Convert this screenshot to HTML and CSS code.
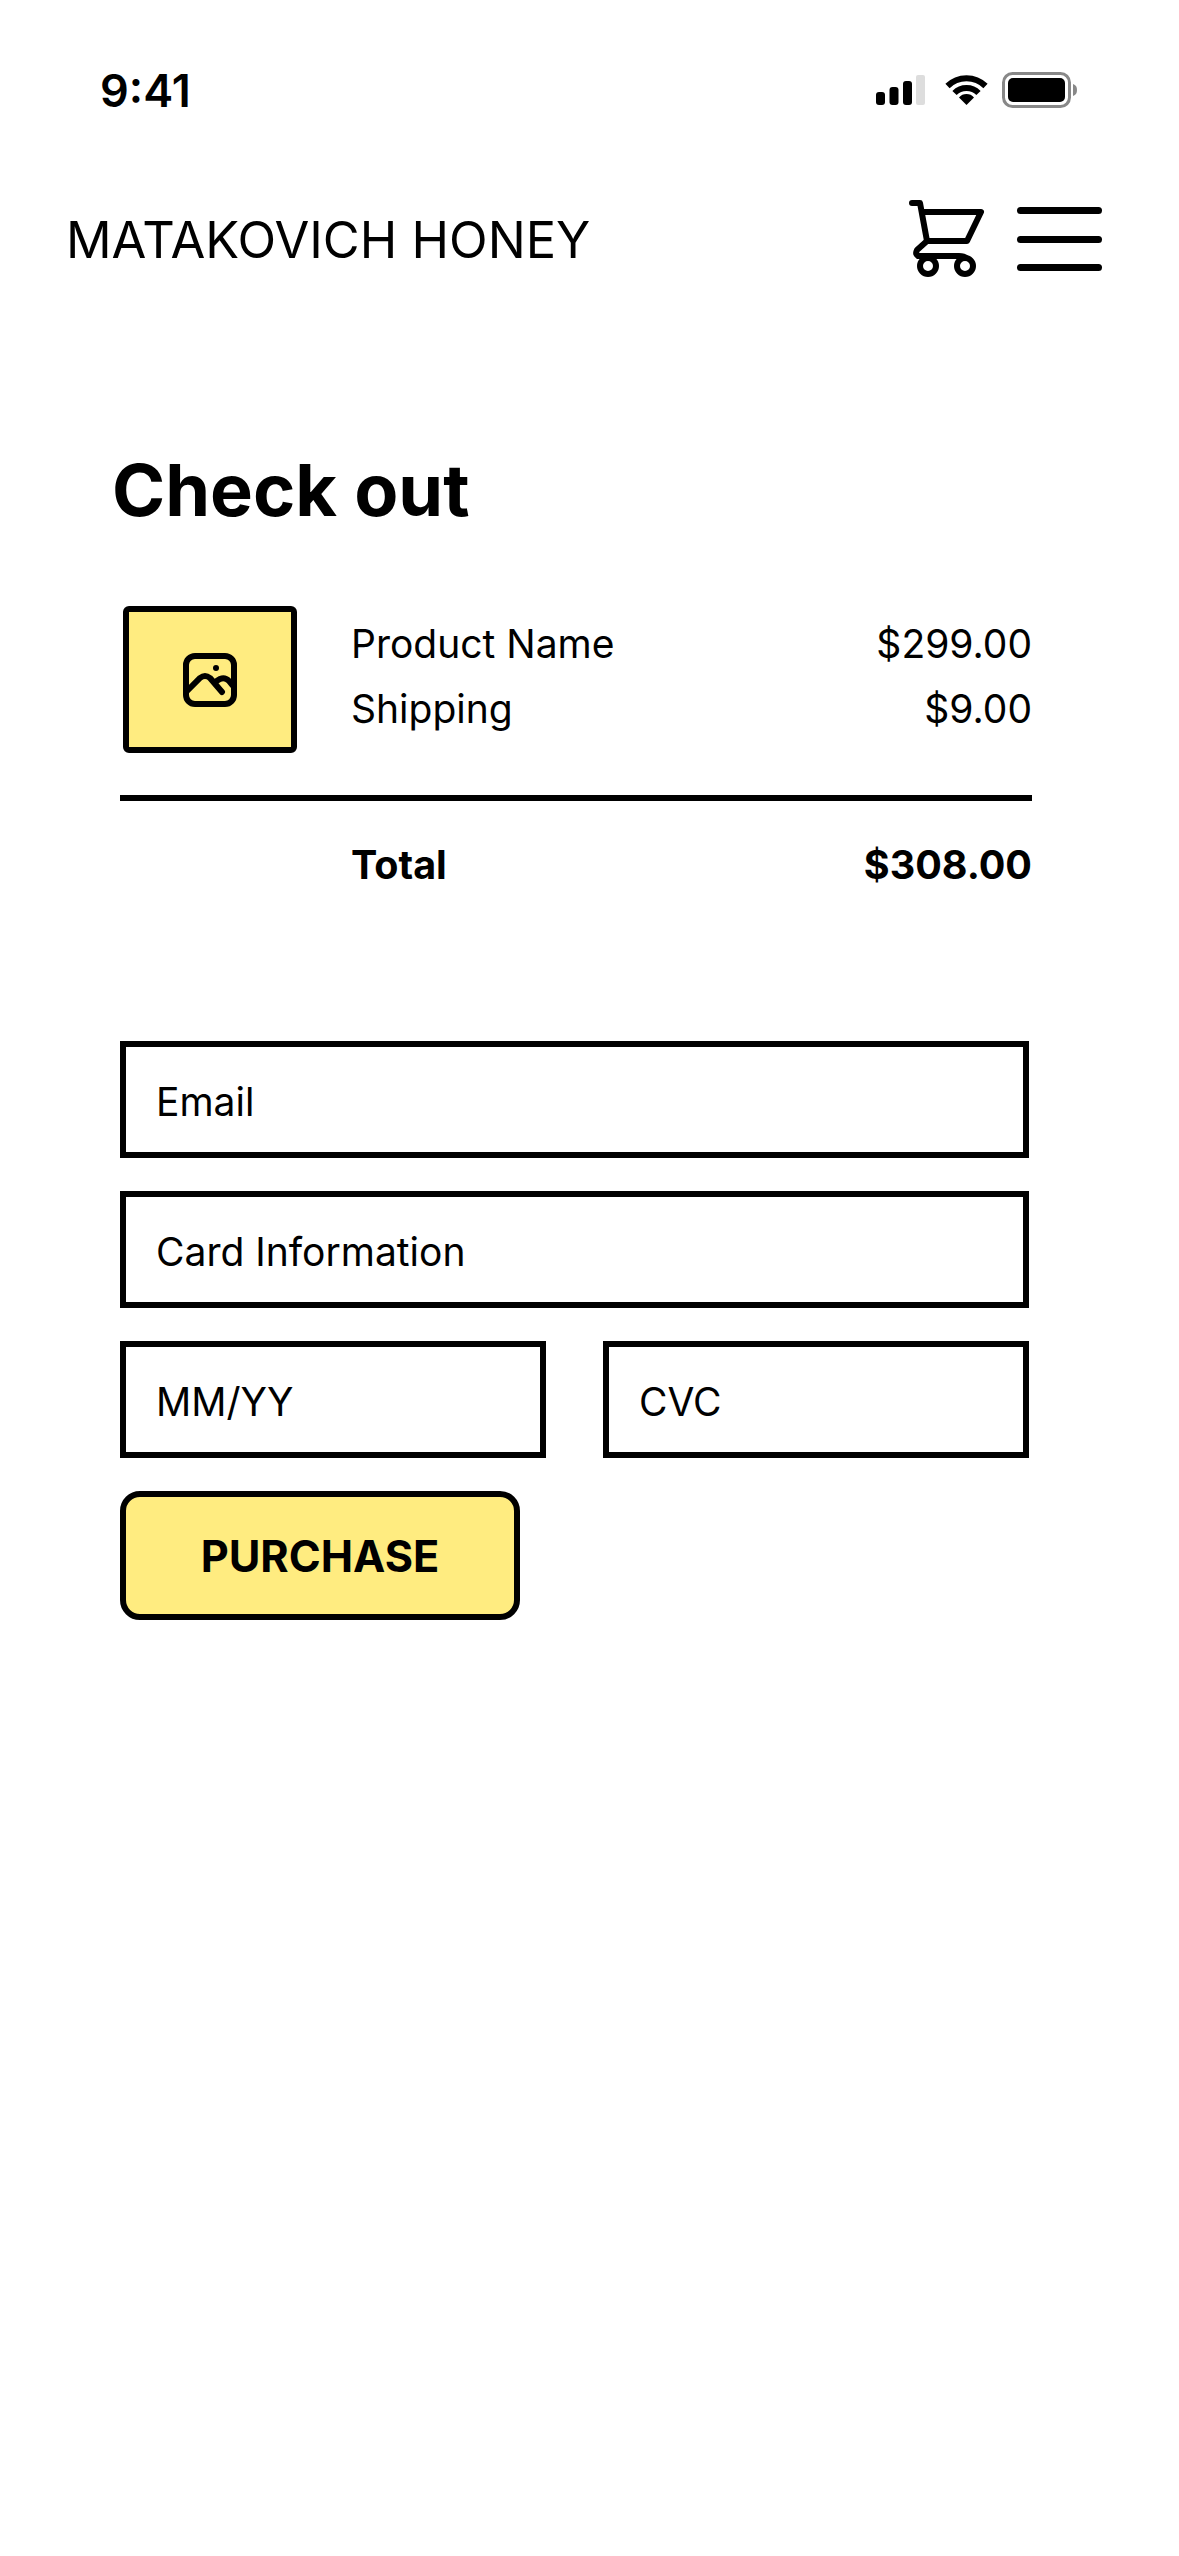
FILE: index.html
```html
<!doctype html>
<html>
  <head>
    <title>Check out</title>
    <meta charset="utf-8" />
    <link rel="stylesheet" href="styles.css">
  </head>
  <body>
    <div class="status">
      <span class="time">9:41</span>
      <div class="status-icons">
        <svg class="signal" width="49" height="30" viewBox="0 0 49 30">
          <rect x="0" y="17" width="9" height="13" rx="3" fill="#000"/>
          <rect x="13.500" y="12" width="9" height="18" rx="3" fill="#000"/>
          <rect x="27" y="6" width="9" height="24" rx="3" fill="#000"/>
          <rect x="40" y="0" width="9" height="30" rx="2" fill="#ddd"/>
        </svg>
        <svg class="wifi" width="43" height="30" viewBox="0 0 43 30">
          <path d="M2.500 11 A27 27 0 0 1 40.500 11" fill="none" stroke="#000" stroke-width="6"/>
          <path d="M9.500 18 A17 17 0 0 1 33.500 18" fill="none" stroke="#000" stroke-width="6"/>
          <path d="M14 22.500 A10 10 0 0 1 29 22.500 L21.500 30 Z" fill="#000"/>
        </svg>
        <svg width="75" height="36" viewBox="0 0 75 36">
          <rect x="1.500" y="1.500" width="66" height="33" rx="9" fill="none" stroke="#888" stroke-width="3"/>
          <rect x="6" y="6" width="57" height="24" rx="5" fill="#000"/>
          <path d="M71 12 C74 13 75 15 75 18 C75 21 74 23 71 24 Z" fill="#888"/>
        </svg>
      </div>
    </div>

    <div class="header">
      <span class="brand">MATAKOVICH HONEY</span>
      <div class="header-icons">
        <svg class="cart" width="76" height="78" viewBox="0 0 76 78">
          <path d="M3 3 H11 L18 41 H58 L72 12 H14" fill="none" stroke="#000" stroke-width="6" stroke-linecap="round" stroke-linejoin="round"/>
          <path d="M18 41 L8 50 Q6 54 9 56 H50 Q60 56 60 66" fill="none" stroke="#000" stroke-width="6" stroke-linecap="round" stroke-linejoin="round"/>
          <circle cx="19" cy="66" r="8" fill="#fff" stroke="#000" stroke-width="6"/>
          <circle cx="56" cy="66" r="8" fill="#fff" stroke="#000" stroke-width="6"/>
        </svg>
        <div class="burger">
          <span></span>
          <span></span>
          <span></span>
        </div>
      </div>
    </div>

    <div class="content">
      <h1>Check out</h1>

      <div class="summary">
        <div class="thumb">
          <svg width="54" height="54" viewBox="0 0 54 54">
            <rect x="3" y="3" width="48" height="48" rx="9" fill="none" stroke="#000" stroke-width="6"/>
            <circle cx="33" cy="15" r="3" fill="#000"/>
            <path d="M4 38 L17 25 Q22 21 27 25 L39 39" fill="none" stroke="#000" stroke-width="6" stroke-linecap="round"/>
            <path d="M32 29 L37 26 Q42 24 46 28 L50 33" fill="none" stroke="#000" stroke-width="6"/>
          </svg>
        </div>
        <div class="lines">
          <div class="line"><span>Product Name</span><span>$299.00</span></div>
          <div class="line"><span>Shipping</span><span>$9.00</span></div>
        </div>
      </div>

      <div class="total"><span>Total</span><span>$308.00</span></div>

      <form class="form">
        <div class="field">Email</div>
        <div class="field">Card Information</div>
        <div class="field-row">
          <div class="field">MM/YY</div>
          <div class="field">CVC</div>
        </div>
        <button class="buy" type="button">PURCHASE</button>
      </form>
    </div>
  </body>
</html>
```

FILE: styles.css
```css
body {
  margin: 0;
  background-color: #fff;
  color: #000;
  font-family: Inter, "Liberation Sans", sans-serif;
}

.status {
  display: flex;
  justify-content: space-between;
  align-items: center;
  height: 180px;
  padding: 0 102px 0 100px;
}

.time {
  font-size: 45px;
  font-weight: 600;
}

.status-icons {
  display: flex;
  align-items: center;
  gap: 14px;
}

.signal {
  margin-right: 6px;
}

.header {
  display: flex;
  justify-content: space-between;
  align-items: center;
  margin-top: 20px;
  padding: 0 77px 0 66px;
}

.brand {
  font-size: 50.500px;
  font-weight: 380;
}

.header-icons {
  display: flex;
  align-items: center;
  gap: 32px;
}

.burger {
  display: flex;
  flex-direction: column;
  gap: 21.500px;
  width: 85px;
}

.burger span {
  height: 7px;
  border-radius: 4px;
  background-color: #000;
}

.content {
  padding: 0 147px 0 120px;
  margin-top: 168px;
}

h1 {
  margin: 0 0 73px -8px;
  font-size: 72px;
  font-weight: 700;
}

.summary {
  display: flex;
  align-items: center;
  padding-bottom: 42px;
  border-bottom: 6px solid #000;
}

.thumb {
  display: flex;
  justify-content: center;
  align-items: center;
  box-sizing: border-box;
  width: 174px;
  height: 147px;
  margin-left: 3px;
  border: 6px solid #000;
  border-radius: 6px;
  background-color: #ffec80;
}

.lines {
  flex: 1;
  margin-left: 54px;
  margin-bottom: 7px;
}

.line {
  display: flex;
  justify-content: space-between;
  font-size: 39px;
  font-weight: 380;
  line-height: 65px;
}

.total {
  display: flex;
  justify-content: space-between;
  padding-left: 231px;
  margin-top: 40px;
  font-size: 39.500px;
  font-weight: 700;
}

.form {
  display: flex;
  flex-direction: column;
  gap: 33px;
  margin-top: 152px;
  width: 909px;
}

.field {
  display: flex;
  align-items: center;
  box-sizing: border-box;
  height: 117px;
  padding: 4px 0 0 30px;
  border: 6px solid #000;
  font-size: 39px;
  font-weight: 380;
}

.field-row {
  display: flex;
  gap: 57px;
}

.field-row .field {
  flex: 1;
}

.buy {
  box-sizing: border-box;
  width: 400px;
  height: 129px;
  border: 6px solid #000;
  border-radius: 20px;
  background-color: #ffec80;
  color: #000;
  font-family: Inter, "Liberation Sans", sans-serif;
  font-size: 43.250px;
  font-weight: 700;
}
```
